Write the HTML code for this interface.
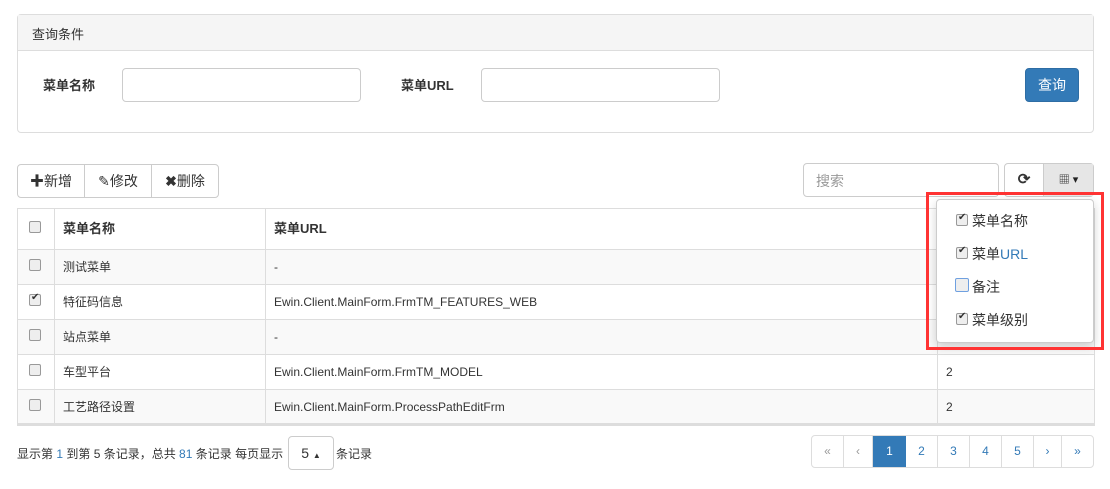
<!DOCTYPE html>
<html><head><meta charset="utf-8"><style>
*{box-sizing:border-box;margin:0;padding:0}
body{width:1110px;height:489px;background:#fff;font-family:"Liberation Sans","Noto Sans CJK SC",sans-serif;font-size:13px;color:#333;position:relative;overflow:hidden}
.a{position:absolute}
.inp{position:absolute;border:1px solid #ccc;border-radius:4px;background:#fff}
.cb{position:absolute;width:12px;height:12px;border:1px solid #999;border-radius:2px;background:#eee}
.ck::after{content:"✔";position:absolute;left:1px;top:-3px;font-size:10px;color:#333}
td{border-right:1px solid #ddd;border-top:1px solid #ddd;padding-left:8px;height:35px;line-height:14px}
td:last-child{border-right:none}
.pg{display:flex;font-size:12px;color:#337ab7}
.pg div{text-align:center;line-height:31px;border-right:1px solid #ddd}
</style></head><body>
<div class="a" style="left:17px;top:14px;width:1077px;height:119px;border:1px solid #ddd;border-radius:4px">
 <div style="height:36px;background:#f5f5f5;border-bottom:1px solid #ddd;padding:9px 14px;font-size:13px">查询条件</div>
</div>
<div class="a" style="left:43px;top:75px;font-weight:bold">菜单名称</div>
<div class="inp" style="left:122px;top:68px;width:239px;height:34px"></div>
<div class="a" style="left:401px;top:75px;font-weight:bold">菜单URL</div>
<div class="inp" style="left:481px;top:68px;width:239px;height:34px"></div>
<div class="a" style="left:1025px;top:68px;width:54px;height:34px;background:#337ab7;border:1px solid #2e6da4;border-radius:4px;color:#fff;font-size:14px;text-align:center;line-height:32px">查询</div>

<div class="a" style="left:17px;top:164px;width:202px;height:34px;border:1px solid #ccc;border-radius:4px;display:flex;font-size:14px">
 <div style="width:67px;border-right:1px solid #ccc;text-align:center;line-height:32px"><b>✚</b>新增</div>
 <div style="width:67px;border-right:1px solid #ccc;text-align:center;line-height:32px">✎修改</div>
 <div style="flex:1;text-align:center;line-height:32px"><b>✖</b>删除</div>
</div>
<div class="inp" style="left:803px;top:163px;width:196px;height:34px;color:#999;font-size:14px;padding:7px 12px">搜索</div>
<div class="a" style="left:1004px;top:163px;width:90px;height:34px;border:1px solid #ccc;border-radius:4px;display:flex">
 <div style="width:39px;border-right:1px solid #ccc;text-align:center;line-height:32px;font-size:15px;font-weight:bold">⟳</div>
 <div style="flex:1;background:#e6e6e6;text-align:center;line-height:32px;font-size:11px;color:#222">▦ ▾</div>
</div>

<table class="a" style="left:17px;top:208px;width:1078px;border:1px solid #ddd;border-bottom:3px solid #ddd;border-collapse:collapse;font-size:12px">
<tr style="height:41px;font-weight:bold;font-size:13px"><td style="width:37px;border-top:none"></td><td style="width:211px;border-top:none">菜单名称</td><td style="width:672px;border-top:none">菜单URL</td><td style="border-top:none"></td></tr>
<tr style="background:#f9f9f9"><td></td><td>测试菜单</td><td>-</td><td></td></tr>
<tr><td></td><td>特征码信息</td><td>Ewin.Client.MainForm.FrmTM_FEATURES_WEB</td><td></td></tr>
<tr style="background:#f9f9f9"><td></td><td>站点菜单</td><td>-</td><td></td></tr>
<tr><td></td><td>车型平台</td><td>Ewin.Client.MainForm.FrmTM_MODEL</td><td>2</td></tr>
<tr style="background:#f9f9f9"><td></td><td>工艺路径设置</td><td>Ewin.Client.MainForm.ProcessPathEditFrm</td><td>2</td></tr>
</table>
<div class="cb" style="left:29px;top:221px"></div>
<div class="cb" style="left:29px;top:259px"></div>
<div class="cb ck" style="left:29px;top:294px"></div>
<div class="cb" style="left:29px;top:329px"></div>
<div class="cb" style="left:29px;top:364px"></div>
<div class="cb" style="left:29px;top:399px"></div>

<div class="a" style="left:936px;top:199px;width:158px;height:144px;background:#fff;border:1px solid #ccc;border-radius:4px;box-shadow:0 4px 10px rgba(0,0,0,.18);font-size:14px">
 <div class="a" style="left:35px;top:11px">菜单名称</div>
 <div class="a" style="left:35px;top:44px">菜单<span style="color:#337ab7">URL</span></div>
 <div class="a" style="left:35px;top:77px">备注</div>
 <div class="a" style="left:35px;top:110px">菜单级别</div>
</div>
<div class="cb ck" style="left:956px;top:214px"></div>
<div class="cb ck" style="left:956px;top:247px"></div>
<div class="cb" style="left:955px;top:278px;width:14px;height:14px;border:1px solid #6fa0e0;background:#eee"></div>
<div class="cb ck" style="left:956px;top:313px"></div>
<div class="a" style="left:926px;top:192px;width:178px;height:158px;border:3px solid #f33"></div>

<div class="a" style="left:17px;top:445px;font-size:12px">显示第 <span style="color:#337ab7">1</span> 到第 5 条记录，总共 <span style="color:#337ab7">81</span> 条记录 每页显示</div>
<div class="inp" style="left:288px;top:436px;width:46px;height:34px;text-align:center;line-height:32px;font-size:14px">5 <span style="font-size:8px">▲</span></div>
<div class="a" style="left:336px;top:445px;font-size:12px">条记录</div>
<div class="a pg" style="left:811px;top:435px;width:283px;height:33px;border:1px solid #ddd;border-radius:4px;overflow:hidden">
 <div style="width:32px;color:#999">«</div>
 <div style="width:29px;color:#999">‹</div>
 <div style="width:33px;background:#337ab7;color:#fff;border-right:none">1</div>
 <div style="width:32px">2</div>
 <div style="width:32px">3</div>
 <div style="width:32px">4</div>
 <div style="width:32px">5</div>
 <div style="width:28px">›</div>
 <div style="flex:1;border-right:none">»</div>
</div>
</body></html>
